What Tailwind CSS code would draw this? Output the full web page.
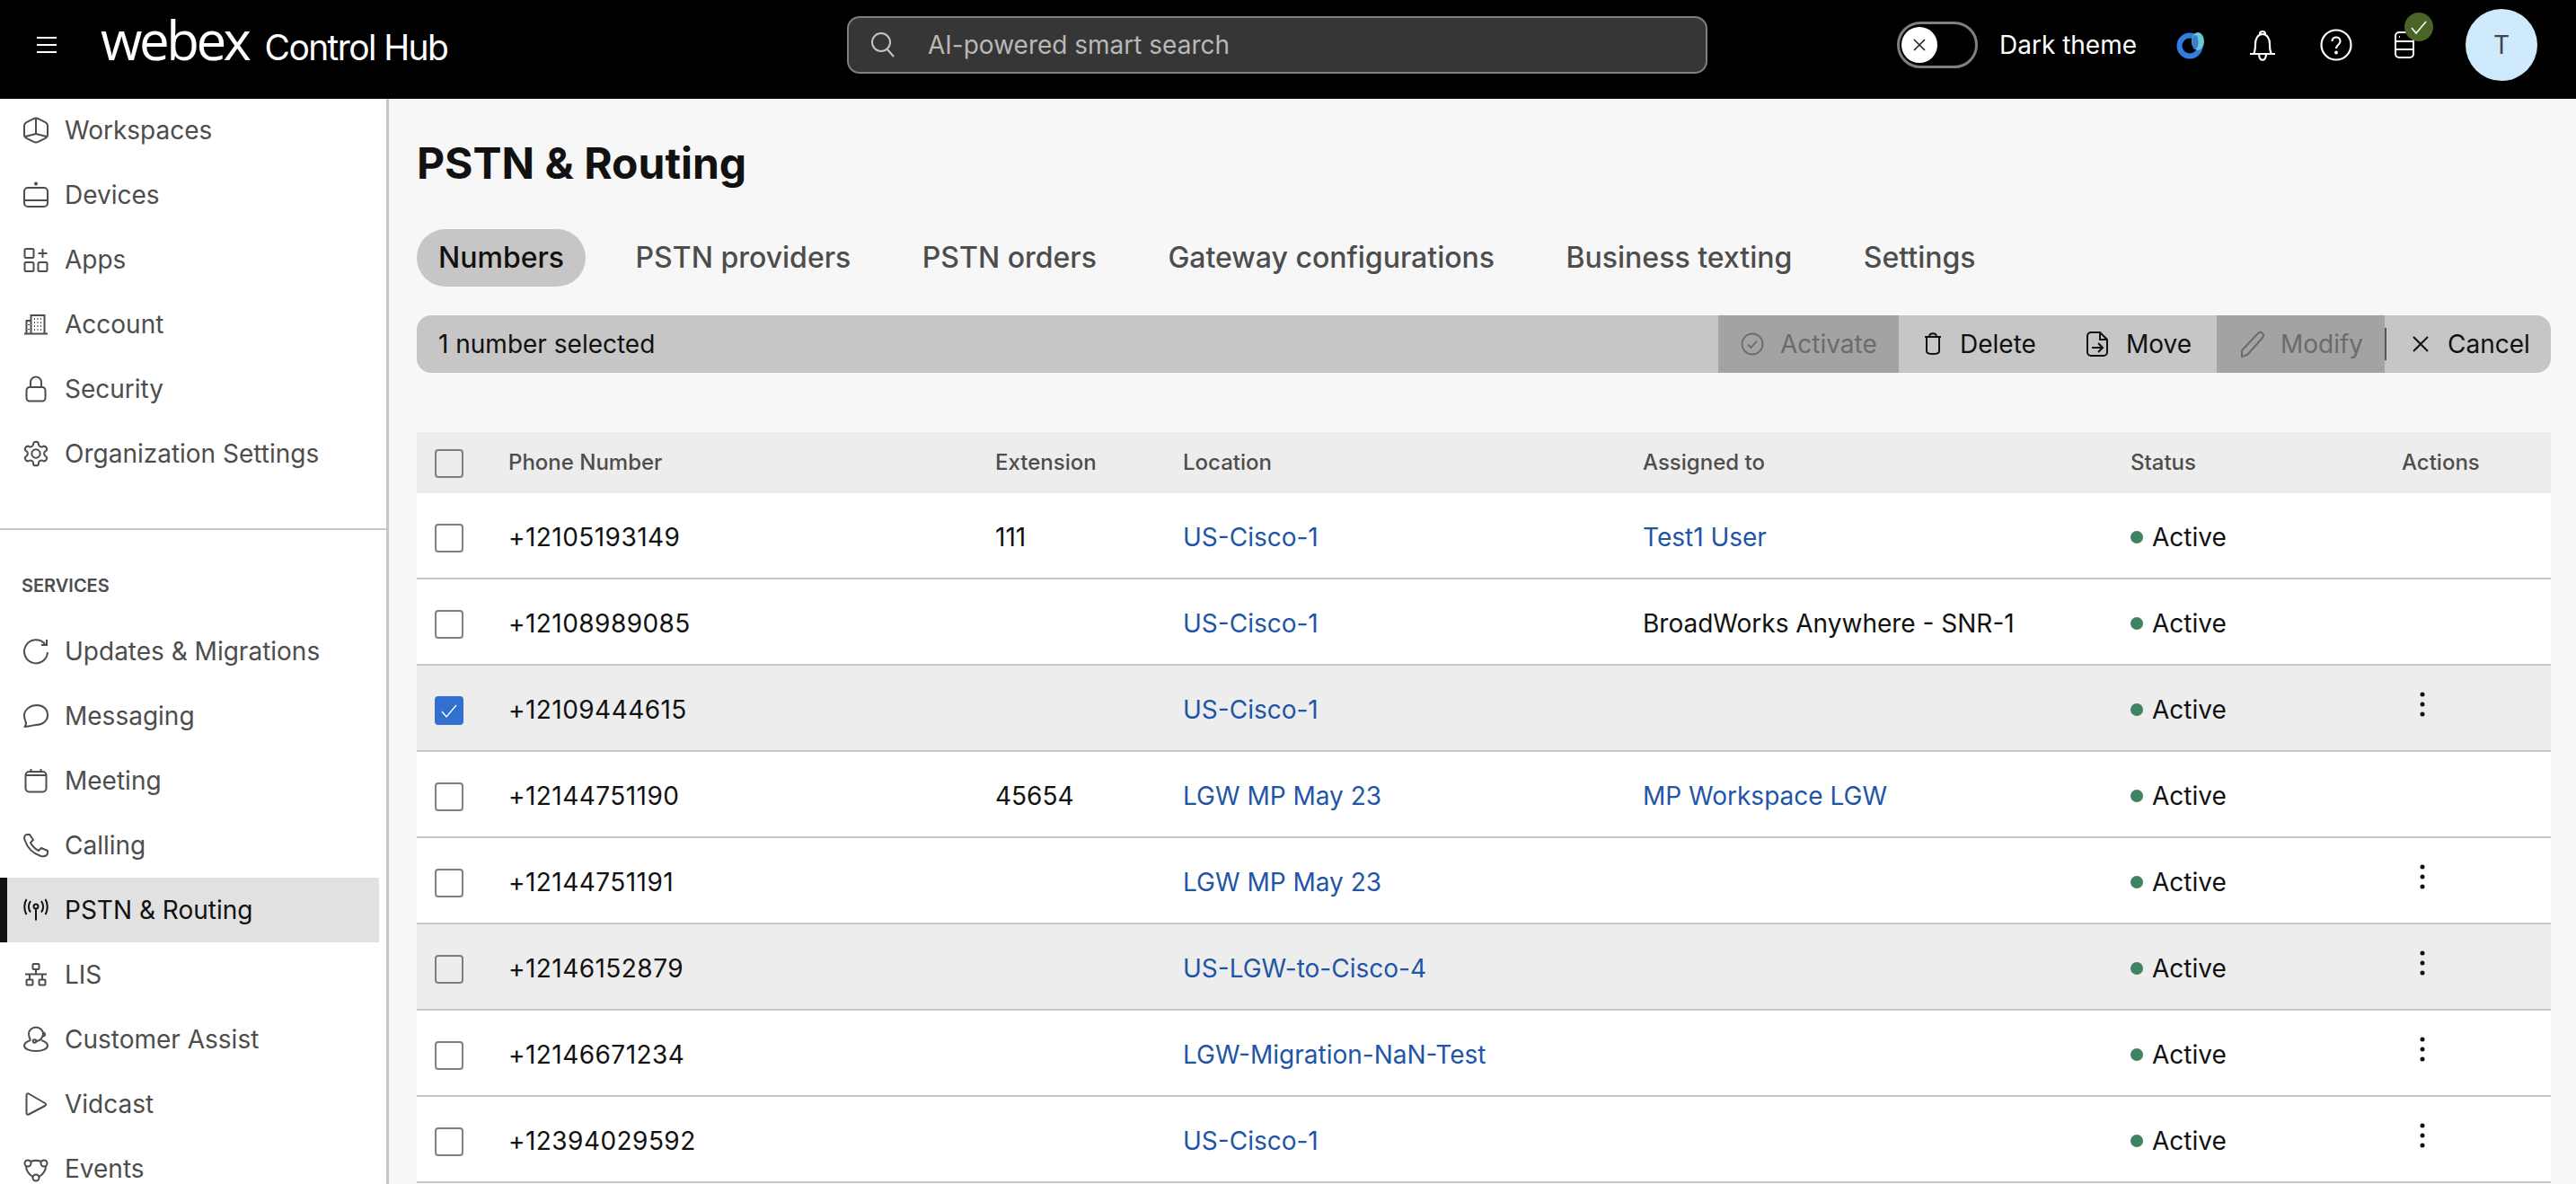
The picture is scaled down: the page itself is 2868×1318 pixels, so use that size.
<!DOCTYPE html>
<html lang="en">
<head>
  <meta charset="UTF-8">
  <meta name="viewport" content="width=device-width, initial-scale=1.0">
  <title>Webex Control Hub</title>
  <script src="https://cdn.jsdelivr.net/npm/@tailwindcss/browser@4"></script>
</head>
<body class="h-screen overflow-hidden bg-[#f7f7f7] font-['Inter',sans-serif] text-[28px] text-[#111]">

  <!-- Top bar -->
  <header class="relative flex h-[110px] items-center bg-black pb-[10px] text-white">
    <div class="flex w-[943px] shrink-0 items-center">
      <svg class="ml-[41px] h-[20px] w-[22px]" viewBox="0 0 22 20" fill="none" stroke="white" stroke-width="2"><path d="M0 2h22M0 10h22M0 18h22"/></svg>
      <div class="-mt-[12px] ml-[49px] flex items-baseline">
        <span class="font-['Open_Sans',sans-serif] text-[60px] leading-none font-medium tracking-[-3.5px]">webex</span>
        <span class="ml-[18px] text-[39px] leading-none tracking-[-1.6px]">Control Hub</span>
      </div>
    </div>

    <div class="flex h-[64px] w-[958px] shrink-0 items-center rounded-[14px] border-2 border-[#7f7f7f] bg-[#363636] pl-[23px] text-[#b8b8b8]">
      <svg class="h-[30px] w-[30px]" viewBox="0 0 30 30" fill="none" stroke="#c4c4c4" stroke-width="2"><circle cx="13" cy="12" r="10"/><path d="M20 20l7 8"/></svg>
      <span class="ml-[35px]">AI-powered smart search</span>
    </div>

    <div class="ml-[211px] flex h-[52px] w-[90px] items-center rounded-full border-[3px] border-[#7f7f7f] pl-[2px]">
      <span class="flex h-[40px] w-[40px] items-center justify-center rounded-full bg-white">
        <svg class="h-[16px] w-[16px]" viewBox="0 0 16 16" fill="none" stroke="#222" stroke-width="1.6"><path d="M2 2l12 12M14 2L2 14"/></svg>
      </span>
    </div>
    <span class="ml-[24px]">Dark theme</span>

    <svg class="ml-[44px] h-[32px] w-[34px]" viewBox="0 0 34 32" fill="none">
      <circle cx="15" cy="17" r="11.5" stroke="#2f7fe0" stroke-width="6"/>
      <ellipse cx="24" cy="12" rx="7" ry="10" fill="#68c9d6"/>
      <ellipse cx="21" cy="13" rx="3.5" ry="8" fill="#3a7ec8"/>
    </svg>
    <svg class="ml-[46px] h-[36px] w-[32px]" viewBox="0 0 32 36" fill="none" stroke="white" stroke-width="2.2" stroke-linejoin="round"><path d="M2 28h28M6 28c2-3 2-6 2-11 0-6 3-11 8-11s8 5 8 11c0 5 0 8 2 11M13 6c0-4 6-4 6 0M12 28c0 9 8 9 8 0"/></svg>
    <svg class="ml-[48px] h-[36px] w-[36px]" viewBox="0 0 36 36" fill="none" stroke="white" stroke-width="2.2"><circle cx="18" cy="18" r="16.5"/><path d="M13.5 14c0-6 9-6 9 0 0 4-4.500 4-4.500 8"/><circle cx="18" cy="26.500" r="0.8" fill="white"/></svg>
    <div class="relative ml-[47px] h-[30px] w-[22px]">
      <svg class="h-[30px] w-[22px]" viewBox="0 0 22 30" fill="none" stroke="white" stroke-width="2"><rect x="1" y="1" width="20" height="28" rx="4"/><path d="M1 11h20M1 20h20M5 6h1"/></svg>
      <span class="absolute -top-[21px] left-[11px] flex h-[32px] w-[32px] items-center justify-center rounded-full bg-[#4a6428]">
        <svg class="h-[20px] w-[20px]" viewBox="0 0 20 20" fill="none" stroke="white" stroke-width="1.5"><path d="M2 11l5 6L18 4"/></svg>
      </span>
    </div>
    <span class="ml-[57px] flex h-[80px] w-[80px] items-center justify-center rounded-full bg-[#cfe9fd] text-[#444]">T</span>
  </header>

  <div class="flex h-[1208px] overflow-hidden">
    <!-- Sidebar -->
    <aside id="sidebar" class="w-[433px] shrink-0 border-r-[3px] border-[#c6c6c6] bg-white text-[#4d4d4d]">
      <nav id="navTop" class="-mt-[1px]"></nav>
      <div class="mt-[47px] border-t-2 border-[#c6c6c6]"></div>
      <div class="mt-[50px] mb-[25px] pl-[24px] text-[20px] leading-[24px] font-semibold">SERVICES</div>
      <nav id="navServices"></nav>
    </aside>

    <!-- Main -->
    <main class="min-w-0 flex-1 pr-[28px] pl-[31px]">
      <h1 class="mt-[44px] text-[48px] leading-[56px] font-bold">PSTN &amp; Routing</h1>
      <div class="mt-[45px] flex items-center gap-[31.5px] text-[32px] leading-[64px] font-medium text-[#4d4d4d]">
        <span class="rounded-full bg-[#c6c6c6] px-[24px] text-[#111]">Numbers</span>
        <span class="px-[24px]">PSTN providers</span>
        <span class="px-[24px]">PSTN orders</span>
        <span class="px-[24px]">Gateway configurations</span>
        <span class="px-[24px]">Business texting</span>
        <span class="px-[24px]">Settings</span>
      </div>

      <div class="mt-[32px] flex h-[64px] items-center rounded-[16px] bg-[#c6c6c6] pl-[24px]">
        <span>1 number selected</span>
        <div class="ml-auto flex h-full items-center">
          <div class="flex h-full w-[201px] items-center bg-[#a3a3a3] pl-[25px] text-[#6b6b6b]">
            <svg class="h-[26px] w-[26px]" viewBox="0 0 26 26" fill="none" stroke="#6b6b6b" stroke-width="1.800"><circle cx="13" cy="13" r="11.500"/><path d="M8 13.500l3.500 3.500L18 9.500"/></svg>
            <span class="ml-[18px]">Activate</span>
          </div>
          <div class="flex h-full w-[209px] items-center pl-[28px]">
            <svg class="h-[26px] w-[20px]" viewBox="0 0 20 26" fill="none" stroke="#111" stroke-width="2"><path d="M1 5h18M6 5c0-5 8-5 8 0M3 5v16c0 4 14 4 14 0V5"/></svg>
            <span class="ml-[20px]">Delete</span>
          </div>
          <div class="flex h-full w-[145px] items-center">
            <svg class="h-[28px] w-[24px]" viewBox="0 0 24 28" fill="none" stroke="#111" stroke-width="2"><path d="M15 1H5a4 4 0 0 0-4 4v18a4 4 0 0 0 4 4h14a4 4 0 0 0 4-4V9zM15 1v8h8M6 18h11M13 13l5 5-5 5"/></svg>
            <span class="ml-[20px]">Move</span>
          </div>
          <div class="flex h-full w-[187px] items-center bg-[#a3a3a3] pl-[26px] text-[#6b6b6b]">
            <svg class="h-[30px] w-[28px]" viewBox="0 0 28 30" fill="none" stroke="#6b6b6b" stroke-width="2" stroke-linejoin="round"><path d="M2 22L20 3c3-3 8 1 5 5L8 27l-6 2z"/></svg>
            <span class="ml-[17px]">Modify</span>
          </div>
          <span class="h-[36px] w-[2px] bg-[#555]"></span>
          <div class="flex h-full w-[183px] items-center pl-[28px]">
            <svg class="h-[20px] w-[20px]" viewBox="0 0 20 20" fill="none" stroke="#111" stroke-width="2"><path d="M2 2l16 16M18 2L2 18"/></svg>
            <span class="ml-[20px]">Cancel</span>
          </div>
        </div>
      </div>

      <div class="mt-[66px] bg-white">
        <div class="grid h-[68px] grid-cols-[102px_542px_209px_512px_543px_302px_1fr] items-center bg-[#ededed] text-[24px] font-medium text-[#4d4d4d]">
          <span class="mt-[2px] ml-[20px] h-[32px] w-[32px] rounded-[4px] border-2 border-[#7f7f7f]"></span>
          <span>Phone Number</span><span>Extension</span><span>Location</span><span>Assigned to</span><span>Status</span><span>Actions</span>
        </div>
        <div id="rows"></div>
      </div>
    </main>
  </div>

  <script>
    // Nav icons, all on a 32 box
    const icons = {
      workspaces: '<path d="M13.500 3.200c1.500-.9 3.500-.9 5 0l8 4c1.500.8 2.500 2 2.500 3.800v10c0 1.800-1 3-2.500 3.800l-8 4c-1.500.7-3.500.7-5 0l-8-4C4 24 3 22.800 3 21V11c0-1.800 1-3 2.500-3.800zM16 3v17M4 23l12-3 12 3" stroke-linejoin="round"/>',
      devices: '<circle cx="16" cy="3.500" r="1" fill="currentColor"/><path d="M7 8h18a4 4 0 0 1 4 4v13a4 4 0 0 1-4 4H7a4 4 0 0 1-4-4V12a4 4 0 0 1 4-4zM3 22h26"/>',
      apps: '<rect x="3.500" y="4" width="10" height="10" rx="1.500"/><rect x="3.500" y="19" width="10" height="10" rx="1.500"/><rect x="18.500" y="19" width="10" height="10" rx="1.500"/><path d="M23.500 4v10M18.500 9h10"/>',
      account: '<path d="M3 26.500h26M10.500 26V6h15v20M10.500 12H5.500v14M14 10h1M17.500 10h1M21 10h1M14 14h1M17.500 14h1M21 14h1M14 18h1M17.500 18h1M21 18h1M14 22h1M17.500 22h1M21 22h1M8 16v1M8 21v1"/>',
      security: '<rect x="5.500" y="14" width="21" height="15.500" rx="3.500"/><path d="M10 14V8.500a6 6 0 0 1 12 0V14"/>',
      settings: '<g transform="scale(1.333)" stroke-width="1.500"><circle cx="12" cy="12" r="3.500"/><path d="M12.220 2h-.44a2 2 0 0 0-2 2v.18a2 2 0 0 1-1 1.730l-.43.250a2 2 0 0 1-2 0l-.15-.08a2 2 0 0 0-2.730.730l-.22.380a2 2 0 0 0 .730 2.730l.15.100a2 2 0 0 1 1 1.720v.510a2 2 0 0 1-1 1.740l-.15.090a2 2 0 0 0-.730 2.730l.22.380a2 2 0 0 0 2.730.730l.15-.08a2 2 0 0 1 2 0l.43.250a2 2 0 0 1 1 1.730V20a2 2 0 0 0 2 2h.44a2 2 0 0 0 2-2v-.18a2 2 0 0 1 1-1.730l.43-.250a2 2 0 0 1 2 0l.15.08a2 2 0 0 0 2.730-.730l.22-.390a2 2 0 0 0-.730-2.730l-.15-.08a2 2 0 0 1-1-1.740v-.5a2 2 0 0 1 1-1.740l.15-.09a2 2 0 0 0 .730-2.730l-.22-.38a2 2 0 0 0-2.730-.730l-.15.08a2 2 0 0 1-2 0l-.43-.25a2 2 0 0 1-1-1.730V4a2 2 0 0 0-2-2z"/></g>',
      updates: '<path d="M26 8A13 13 0 1 0 29 17M28 3v6h-6"/>',
      messaging: '<path d="M17 4c7 0 12 4.500 12 11s-6 11-13 11c-3 0-5 1.500-12.500 2 1.500-2 2-4 1-6-1-2-1.500-4-1.500-7C3 9 10 4 17 4z" stroke-linejoin="round"/>',
      meeting: '<rect x="4.500" y="6" width="23" height="22.500" rx="4"/><path d="M4.500 10h23M10.500 3v3M21.500 3v3"/>',
      calling: '<path d="M9 4H6C3.500 4 2.500 7 3.500 10c3 9 9 15 18 18 3.500 1 7.500-.5 7.500-3.500V22l-7-3-3 3c-4-2-7-5-9-9l3-3z" stroke-linejoin="round"/>',
      pstn: '<circle cx="16" cy="12" r="2.500"/><path d="M16 14.500v13M10 6c-2.500 4-2.500 9 0 12.500M22 6c2.500 4 2.500 9 0 12.500M5.500 4c-3 5-3 12 0 17M26.500 4c3 5 3 12 0 17"/>',
      lis: '<rect x="12.500" y="4" width="7" height="6" rx="1"/><rect x="5.500" y="21.500" width="7" height="6" rx="1"/><rect x="19.500" y="21.500" width="7" height="6" rx="1"/><path d="M16 10v5.500M4 15.500h24M9 15.500v6M23 15.500v6"/>',
      customer: '<path d="M10 17c-4.500 1.500-7 3.500-7 6 0 3.500 6 6 13 6s13-2.500 13-6c0-2.500-2.500-4.500-7-6M10 17c-1-2-2-4-2-7 0-4 3.500-7.500 8-7.500s8 3.500 8 7.500c0 3-3 8-8 8"/><circle cx="14.500" cy="18" r="1.800"/><path d="M24 8.500c1.500 0 2 1 2 2s-.5 2-2 2"/>',
      vidcast: '<path d="M5.500 6c0-1.500 1-2 2.500-1.500L26 15c1.500 1 1.500 2 0 3L8 27.500c-1.500.5-2.500 0-2.500-1.500z" stroke-linejoin="round"/>',
      events: '<circle cx="7" cy="10" r="3.500"/><circle cx="25" cy="10" r="3.500"/><circle cx="16" cy="26" r="3.500"/><path d="M10 8c4-1.500 8-1.500 12 0M5 13c0 5 3 9 7.500 12M27 13c0 5-3 9-7.500 12"/>'
    };

    function navRow(label, icon, active) {
      const cls = active
        ? 'mr-[8px] border-[#111] bg-[#e1e1e1] text-[#111]'
        : 'mr-[8px] border-transparent';
      return `<a class="flex h-[72px] items-center border-l-8 pl-[16px] ${cls}">
        <svg class="h-[32px] w-[32px] shrink-0" viewBox="0 0 32 32" fill="none" stroke="currentColor" stroke-width="2">${icons[icon]}</svg>
        <span class="ml-[16px]">${label}</span>
      </a>`;
    }

    document.getElementById('navTop').innerHTML = [
      ['Workspaces', 'workspaces'], ['Devices', 'devices'], ['Apps', 'apps'],
      ['Account', 'account'], ['Security', 'security'], ['Organization Settings', 'settings']
    ].map(n => navRow(n[0], n[1])).join('');

    document.getElementById('navServices').innerHTML = [
      ['Updates &amp; Migrations', 'updates'], ['Messaging', 'messaging'], ['Meeting', 'meeting'],
      ['Calling', 'calling'], ['PSTN &amp; Routing', 'pstn', true], ['LIS', 'lis'],
      ['Customer Assist', 'customer'], ['Vidcast', 'vidcast'], ['Events', 'events']
    ].map(n => navRow(n[0], n[1], n[2])).join('');

    // number, extension, location, assigned, assigned is link, gray row, checked, kebab
    const numbers = [
      ['+12105193149', '111', 'US-Cisco-1', 'Test1 User', true, false, false, false],
      ['+12108989085', '', 'US-Cisco-1', 'BroadWorks Anywhere - SNR-1', false, false, false, false],
      ['+12109444615', '', 'US-Cisco-1', '', false, true, true, true],
      ['+12144751190', '45654', 'LGW MP May 23', 'MP Workspace LGW', true, false, false, false],
      ['+12144751191', '', 'LGW MP May 23', '', false, false, false, true],
      ['+12146152879', '', 'US-LGW-to-Cisco-4', '', false, true, false, true],
      ['+12146671234', '', 'LGW-Migration-NaN-Test', '', false, false, false, true],
      ['+12394029592', '', 'US-Cisco-1', '', false, false, false, true]
    ];

    document.getElementById('rows').innerHTML = numbers.map(r => `
      <div class="grid h-[96px] grid-cols-[102px_542px_209px_512px_543px_302px_1fr] items-center border-b-2 border-[#c6c6c6] pt-[4px] ${r[5] ? 'bg-[#ededed]' : 'bg-white'}">
        ${r[6]
          ? `<span class="mt-[2px] ml-[20px] flex h-[32px] w-[32px] items-center justify-center rounded-[4px] bg-[#3270cf]"><svg class="h-[18px] w-[18px]" viewBox="0 0 18 18" fill="none" stroke="white" stroke-width="1.400"><path d="M1 10l5 6L17 3"/></svg></span>`
          : `<span class="mt-[2px] ml-[20px] h-[32px] w-[32px] rounded-[4px] border-2 border-[#7f7f7f]"></span>`}
        <span class="tracking-[0.45px]">${r[0]}</span>
        <span>${r[1]}</span>
        <a class="text-[#1f55a6]">${r[2]}</a>
        <span class="${r[4] ? 'text-[#1f55a6]' : ''}">${r[3]}</span>
        <span class="flex items-center"><i class="h-[14px] w-[14px] rounded-full bg-[#3f8363]"></i><span class="ml-[10px]">Active</span></span>
        <span>${r[7] ? '<svg class="mb-[12px] ml-[7px] h-[32px] w-[32px]" viewBox="0 0 32 32" fill="#111"><circle cx="16" cy="5" r="2.500"/><circle cx="16" cy="16" r="2.500"/><circle cx="16" cy="27" r="2.500"/></svg>' : ''}</span>
      </div>`).join('');
  </script>
</body>
</html>
